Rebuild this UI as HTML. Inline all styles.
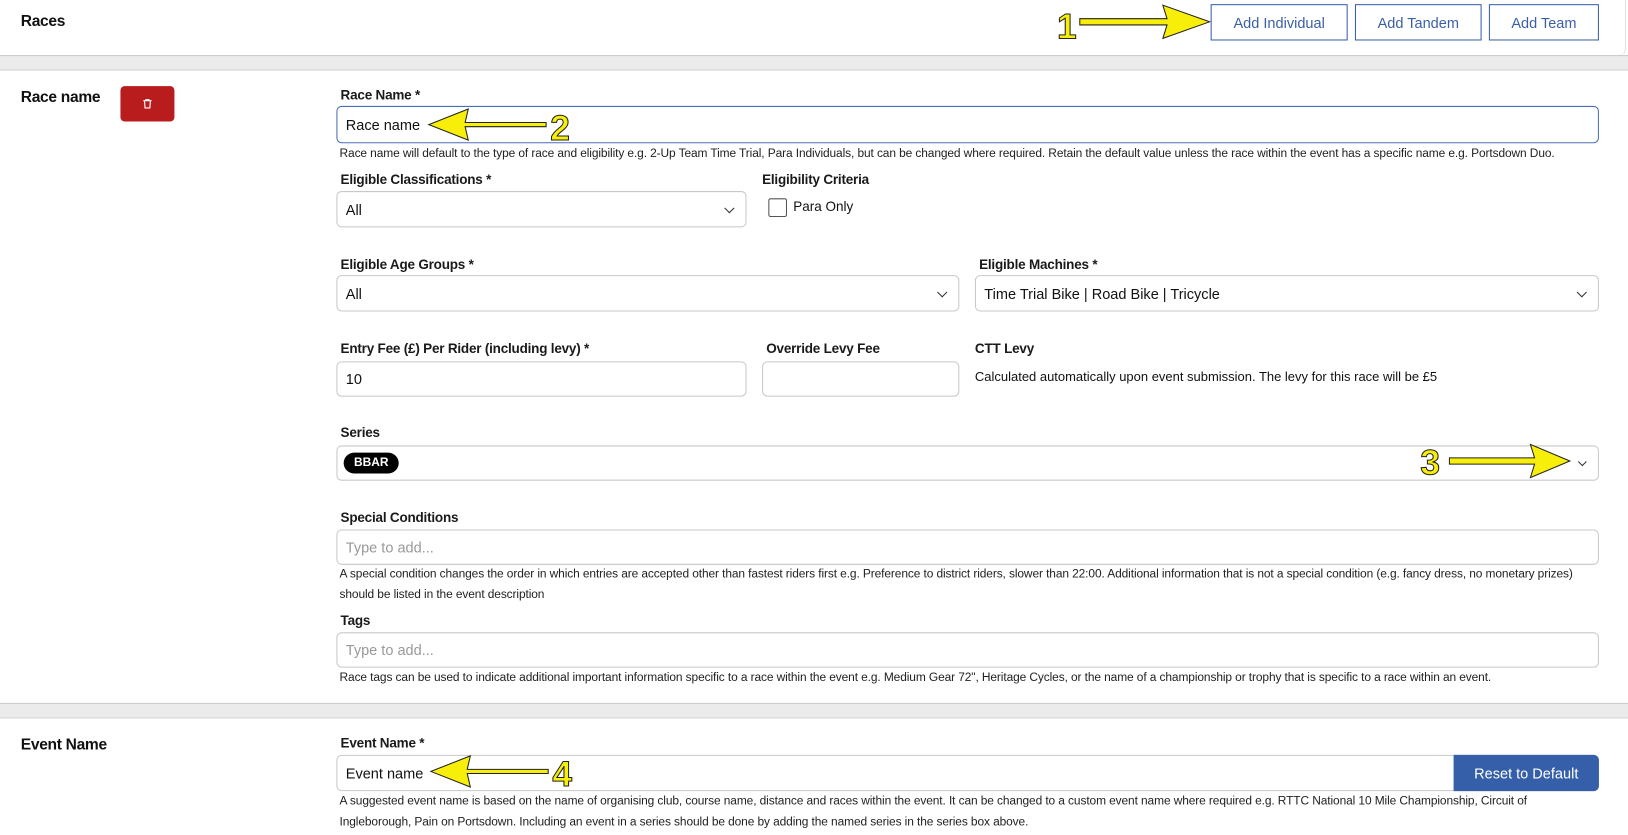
<!DOCTYPE html>
<html><head><meta charset="utf-8"><style>
*{box-sizing:border-box;margin:0;padding:0}
html,body{width:1628px;height:835px;overflow:hidden;background:#fff}
#w{width:1568px;height:805px;position:relative;transform:scale(1.03827);transform-origin:0 0;font-family:"Liberation Sans",sans-serif;color:#111}
.a{position:absolute}
.h{font-weight:bold;font-size:15px;letter-spacing:-0.3px}
.lbl{font-size:13px;font-weight:bold;color:#1a1a1a;letter-spacing:-0.2px}
.help{font-size:11.5px;color:#222;line-height:20px;letter-spacing:-0.1px}
.in{border:1px solid #c8c8c8;border-radius:5px;background:#fff;font-size:14px;padding-left:8px;display:flex;align-items:center}
.ph{color:#999}
.btn{border:1px solid #3a5fa8;color:#3a5fa8;font-size:14px;display:flex;align-items:center;justify-content:center;background:#fff}
.band{left:0;width:1568px;height:15px;background:#ebebeb;border-top:1px solid #ccc;border-bottom:1px solid #d4d4d4}
.chev{position:absolute;right:12px;top:50%;width:7px;height:7px;border-right:1.5px solid #333;border-bottom:1.5px solid #333;transform:translateY(-70%) rotate(45deg)}
</style></head><body><div id="w">
<div class="a" style="left:0;top:0;width:1566px;height:53px;border-right:1px solid #ddd;border-bottom-right-radius:6px"></div>
<div class="a h" style="left:20px;top:12px">Races</div>
<div class="a btn" style="left:1166px;top:4px;width:132px;height:35px">Add Individual</div>
<div class="a btn" style="left:1305px;top:4px;width:122px;height:35px">Add Tandem</div>
<div class="a btn" style="left:1434px;top:4px;width:106px;height:35px">Add Team</div>
<div class="a band" style="top:53px"></div>

<div class="a h" style="left:20px;top:85px">Race name</div>
<div class="a" style="left:116px;top:83px;width:52px;height:34px;background:#b91c1c;border-radius:4px;display:flex;align-items:center;justify-content:center">
<svg width="10" height="10" viewBox="0 0 10 10"><path d="M1 2h8M3.5 2V1h3v1M2.2 2.5l.5 6.5h4.6l.5-6.5" stroke="#fff" fill="none" stroke-width="1.1"/></svg></div>

<div class="a lbl" style="left:328px;top:84px">Race Name *</div>
<div class="a in" style="left:324px;top:102px;width:1216px;height:36px;border:1.5px solid #4a6fb5">Race name</div>
<div class="a help" style="left:327px;top:138px">Race name will default to the type of race and eligibility e.g. 2-Up Team Time Trial, Para Individuals, but can be changed where required. Retain the default value unless the race within the event has a specific name e.g. Portsdown Duo.</div>

<div class="a lbl" style="left:328px;top:165px">Eligible Classifications *</div>
<div class="a in" style="left:324px;top:184px;width:395px;height:35px">All<span class="chev"></span></div>
<div class="a lbl" style="left:734px;top:165px">Eligibility Criteria</div>
<div class="a" style="left:740px;top:191px;width:18px;height:18px;border:1px solid #555;border-radius:2px"></div>
<div class="a" style="left:764px;top:191px;font-size:13px">Para Only</div>

<div class="a lbl" style="left:328px;top:247px">Eligible Age Groups *</div>
<div class="a in" style="left:324px;top:265px;width:600px;height:35px">All<span class="chev"></span></div>
<div class="a lbl" style="left:943px;top:247px">Eligible Machines *</div>
<div class="a in" style="left:939px;top:265px;width:601px;height:35px">Time Trial Bike | Road Bike | Tricycle<span class="chev"></span></div>

<div class="a lbl" style="left:328px;top:328px">Entry Fee (£) Per Rider (including levy) *</div>
<div class="a in" style="left:324px;top:348px;width:395px;height:34px">10</div>
<div class="a lbl" style="left:738px;top:328px">Override Levy Fee</div>
<div class="a in" style="left:734px;top:348px;width:190px;height:34px"></div>
<div class="a lbl" style="left:939px;top:328px">CTT Levy</div>
<div class="a" style="left:939px;top:356px;font-size:12.5px">Calculated automatically upon event submission. The levy for this race will be £5</div>

<div class="a lbl" style="left:328px;top:409px">Series</div>
<div class="a in" style="left:324px;top:429px;width:1216px;height:34px;padding-left:6px"><span style="background:#000;color:#fff;font-weight:bold;font-size:11.5px;border-radius:12px;padding:4px 10px">BBAR</span><span class="chev" style="width:6px;height:6px"></span></div>

<div class="a lbl" style="left:328px;top:491px">Special Conditions</div>
<div class="a in ph" style="left:324px;top:510px;width:1216px;height:34px">Type to add...</div>
<div class="a help" style="left:327px;top:543px;width:1220px">A special condition changes the order in which entries are accepted other than fastest riders first e.g. Preference to district riders, slower than 22:00. Additional information that is not a special condition (e.g. fancy dress, no monetary prizes) should be listed in the event description</div>

<div class="a lbl" style="left:328px;top:590px">Tags</div>
<div class="a in ph" style="left:324px;top:609px;width:1216px;height:34px">Type to add...</div>
<div class="a help" style="left:327px;top:643px">Race tags can be used to indicate additional important information specific to a race within the event e.g. Medium Gear 72", Heritage Cycles, or the name of a championship or trophy that is specific to a race within an event.</div>

<div class="a band" style="top:677px"></div>

<div class="a h" style="left:20px;top:709px">Event Name</div>
<div class="a lbl" style="left:328px;top:708px">Event Name *</div>
<div class="a in" style="left:324px;top:727px;width:1216px;height:35px">Event name</div>
<div class="a" style="left:1400px;top:727px;width:140px;height:35px;background:#3560a9;color:#fff;font-size:14px;display:flex;align-items:center;justify-content:center;border-radius:0 5px 5px 0">Reset to Default</div>
<div class="a help" style="left:327px;top:762px;width:1200px">A suggested event name is based on the name of organising club, course name, distance and races within the event. It can be changed to a custom event name where required e.g. RTTC National 10 Mile Championship, Circuit of Ingleborough, Pain on Portsdown. Including an event in a series should be done by adding the named series in the series box above.</div>

<svg class="a" style="left:0;top:0" width="1568" height="805">
<g fill="#f7ef0a" stroke="#222" stroke-width="1" font-family="Liberation Sans" font-weight="bold" font-size="34">
<text x="1018" y="37">1</text>
<path d="M1040 18h84l-4-13 45 16-45 16 4-13h-84z"/>
<text x="530" y="135">2</text>
<path d="M526 118h-78l3-13-38 15 38 15-3-13h78z"/>
<text x="1368" y="457">3</text>
<path d="M1396 441h82l-4-13 38 16-38 16 4-13h-82z"/>
<text x="532" y="757">4</text>
<path d="M528 741h-78l3-13-38 15 38 15-3-13h78z"/>
</g></svg>
</div></body></html>
